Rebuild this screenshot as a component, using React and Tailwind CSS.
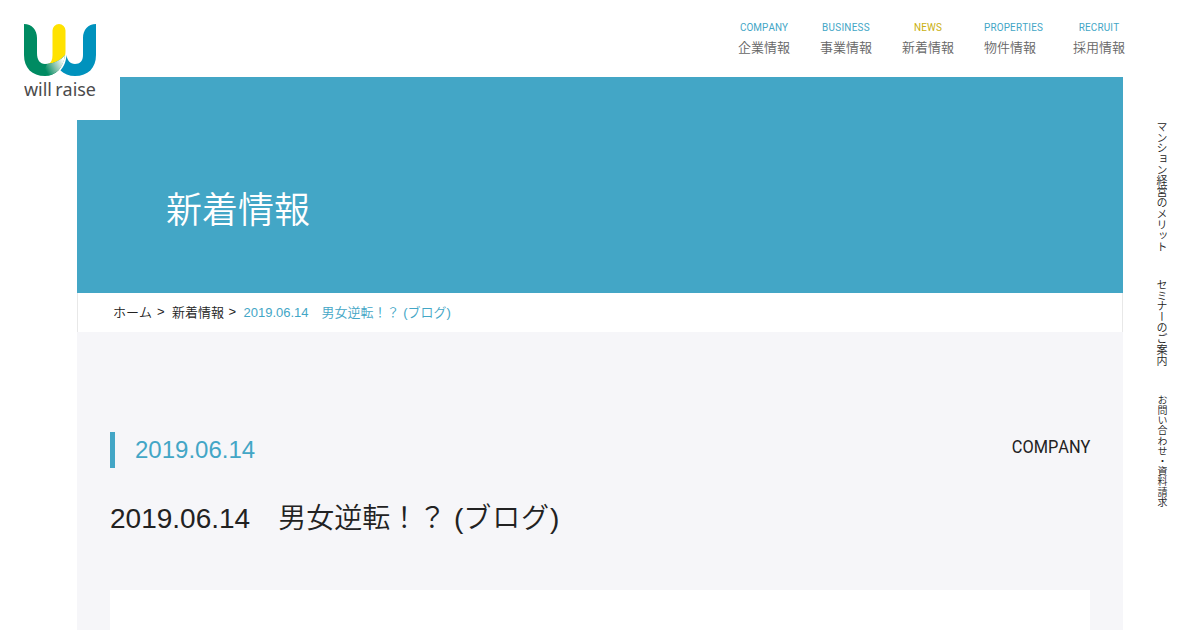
import React from 'react';

const navItems = [
  { en: 'COMPANY', ja: '企業情報', className: 'w-[52px] mr-[30px]', color: 'text-[#43a6c6]', enClass: 'tracking-[0.1px]' },
  { en: 'BUSINESS', ja: '事業情報', className: 'w-[52px] mr-[30px]', color: 'text-[#43a6c6]', enClass: 'tracking-[0.3px]' },
  { en: 'NEWS', ja: '新着情報', className: 'w-[52px] mr-[30px]', color: 'text-[#c9b010]', enClass: 'tracking-[0.2px]' },
  { en: 'PROPERTIES', ja: '物件情報', className: 'w-[59px] mr-[30px]', color: 'text-[#43a6c6]', enClass: 'tracking-[0.2px]' },
  { en: 'RECRUIT', ja: '採用情報', className: 'w-[52px]', color: 'text-[#43a6c6]', enClass: 'tracking-[0.2px]' },
];

const Logo = () => {
  return (
    <svg width="73" height="78" viewBox="0 0 73 78" className="block">
      <defs>
        <linearGradient id="fold" gradientUnits="userSpaceOnUse" x1="22" y1="47" x2="40" y2="37">
          <stop offset="0" stopColor="#008b62" />
          <stop offset="0.5" stopColor="#8cc4ae" />
          <stop offset="1" stopColor="#ffffff" />
        </linearGradient>
      </defs>
      <path d="M59 14C59 6 64 0 72 0V31C72 44 64 52 51 52C45 52 40 50 36.500 46.500C40 42 42 38 42.500 31C43 36 46 40 51 40C56 40 59 37 59 31Z" fill="#0092bd" />
      <path d="M28.500 6.500a6.500 6.500 0 0 1 13 0V27C41.500 34 39 38 34 42L24 40C27 39 28.500 36 28.500 31Z" fill="#ffe200" />
      <path d="M0 0C8 0 13 6 13 14V29C13 36 16 40 21 40C29 40 36 37 41 31C39 44 32 52 21 52C8 52 0 44 0 31Z" fill="#008b62" />
      <path d="M18 50C21 45 22 42 23 40C31 39 37 36 41 31C40 40 35 49 26 51Z" fill="url(#fold)" />
      <text x="0" y="72" textLength="72" lengthAdjust="spacingAndGlyphs" fontSize="18" fontWeight="400" wordSpacing="-1.500" fill="#4b4b4b" fontFamily="'Noto Sans', sans-serif">
        will raise
      </text>
    </svg>
  );
};

const SideNav = () => {
  return (
    <aside className="w-[77px] flex flex-col items-center pt-[44px] pr-[1px] text-[11px] leading-[12px] text-[#222]">
      <a className="h-[158px] [writing-mode:vertical-rl] tracking-[-0.1px] whitespace-nowrap">マンション経営のメリット</a>
      <a className="h-[116px] [writing-mode:vertical-rl] tracking-[-0.15px] whitespace-nowrap">セミナーのご案内</a>
      <a className="[writing-mode:vertical-rl] text-[10px] tracking-[0.2px] whitespace-nowrap">お問い合わせ・資料請求</a>
    </aside>
  );
};

const App = () => {
  return (
    <div className="relative h-[630px] w-[1200px] overflow-hidden bg-white font-['Liberation_Sans','Noto_Sans_CJK_JP',sans-serif] font-[350] text-[#222] [font-kerning:none]">
      <header className="flex h-[77px] justify-end pr-[75px] pt-[20px]">
        <nav className="flex text-center">
          {navItems.map((item) => (
            <a key={item.en} className={`block ${item.className}`}>
              <span className={`flex h-[14px] justify-center whitespace-nowrap font-['Roboto',sans-serif] font-normal text-[11px] leading-[15px] scale-x-90 ${item.color} ${item.enClass}`}>
                {item.en}
              </span>
              <span className="block w-[52px] whitespace-nowrap pt-[4px] text-[13px] leading-[20px] text-[#666]">{item.ja}</span>
            </a>
          ))}
        </nav>
      </header>

      <div className="flex">
        <main className="ml-[77px] w-[1046px]">
          <div className="flex h-[216px] items-center bg-[#43a6c6] pl-[89px] pt-[52px]">
            <h1 className="text-[36px] leading-[50px] text-white">新着情報</h1>
          </div>

          <div className="flex h-[39px] border-x border-[#e8e8e8] pl-[35px] pt-[10px] text-[13px] leading-[20px]">
            <a>ホーム</a>
            <span className="ml-[5px] mr-[7.400px] leading-[18px]">&gt;</span>
            <a>新着情報</a>
            <span className="ml-[4.500px] mr-[7.400px] leading-[18px]">&gt;</span>
            <span className="text-[#43a6c6]">2019.06.14　男女逆転！？ (ブログ)</span>
          </div>

          <section className="h-[298px] bg-[#f6f6f9] px-[33px] pt-[100px]">
            <div className="flex h-[36px] justify-between">
              <p className="border-l-[5px] border-[#43a6c6] pl-[20px] text-[24px] leading-[36px] text-[#43a6c6]">2019.06.14</p>
              <p className="origin-right scale-x-[0.86] font-['Roboto',sans-serif] font-normal text-[19px] leading-[30px]">COMPANY</p>
            </div>
            <h2 className="mt-[30px] h-[42px] text-[28px] leading-[42px]">
              2019.06.14　男女逆転！？ (<span className="tracking-[0.9px]">ブログ</span>)
            </h2>
            <div className="mt-[50px] h-[40px] bg-white" />
          </section>
        </main>
        <SideNav />
      </div>

      <div className="absolute left-0 top-0 size-[120px] bg-white p-[24px]">
        <Logo />
      </div>
    </div>
  );
};

export default App;
